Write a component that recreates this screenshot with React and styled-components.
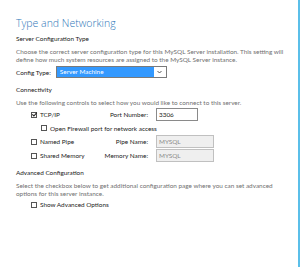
import React from 'react'
import styled, { createGlobalStyle } from 'styled-components'

const GlobalStyle = createGlobalStyle`
  html, body {
    margin: 0;
    padding: 0;
    background: #ffffff;
  }
  body {
    font-family: "Lato", "Noto Sans", sans-serif;
  }
`

const Page = styled.div`
  width: 300px;
  height: 267px;
  box-sizing: border-box;
  border-right: 2px solid #5bbfe9;
  padding: 16px 0 0 16px;
  overflow: hidden;
  color: #333;
  white-space: nowrap;
`

const Title = styled.h1`
  margin: 0 0 4px 0;
  font-family: "Open Sans", sans-serif;
  font-weight: 300;
  font-size: 10.5px;
  line-height: 14px;
  color: #2f78b9;
`

const Heading = styled.div`
  font-size: 6.4px;
  line-height: 9px;
  color: #1a1a1a;
  margin-bottom: 5px;
`

const Description = styled.p`
  margin: 0;
  font-size: 6.4px;
  line-height: 8px;
  color: #707070;
`

const Section = styled.div`
  margin-top: ${p => p.$top || 0}px;
`

const ConfigRow = styled.div`
  display: flex;
  align-items: center;
  margin-top: 2px;
  font-size: 6.4px;
  color: #222;
`

const Select = styled.div`
  margin-left: 5px;
  width: 111px;
  height: 12px;
  box-sizing: border-box;
  border: 1px solid #7a7a7a;
  display: flex;
  align-items: stretch;
`

const SelectValue = styled.div`
  flex: 1;
  background: #3399ff;
  color: #fff;
  padding-left: 3px;
  font-size: 6.4px;
  line-height: 10px;
`

const SelectArrow = styled.div`
  width: 12px;
  background: #fff;
  display: flex;
  align-items: center;
  justify-content: center;
`

const OptionGrid = styled.div`
  display: grid;
  grid-template-columns: 60px 57px auto;
  row-gap: 0.7px;
  margin-top: ${p => p.$top || 0}px;
  padding-left: 15px;
  align-items: center;
`

const Check = styled.label`
  display: flex;
  align-items: center;
  gap: 3px;
  height: 13px;
  font-size: 6.4px;
  color: #222;
  padding-left: ${p => p.$indent || 0}px;
  grid-column: ${p => (p.$wide ? '1 / 4' : 'auto')};
`

const Box = styled.span`
  flex-shrink: 0;
  width: 6px;
  height: 6px;
  box-sizing: border-box;
  border: 1px solid #555;
  background: #fff;
  display: inline-flex;
  align-items: center;
  justify-content: center;
`

const LabelCell = styled.div`
  display: flex;
  justify-content: flex-end;
  font-size: 6.4px;
  color: #222;
`

const Input = styled.div`
  margin-left: 8px;
  width: ${p => p.$w}px;
  height: 13px;
  box-sizing: border-box;
  border: 1px solid ${p => (p.$disabled ? '#c0c0c0' : '#8a8a8a')};
  background: ${p => (p.$disabled ? '#efefef' : '#fff')};
  color: ${p => (p.$disabled ? '#8a8a8a' : '#222')};
  font-size: 6.4px;
  line-height: 11px;
  padding-left: 2px;
`

const Tick = () => (
  <svg width="5" height="5" viewBox="0 0 5 5" style={{ overflow: 'visible' }}>
    <path d="M0.3 2.4 L1.9 4 L4.8 0.6" fill="none" stroke="#222" strokeWidth="1.1" />
  </svg>
)

const Chevron = () => (
  <svg width="5" height="4" viewBox="0 0 5 4">
    <path d="M0.5 1 L2.5 3 L4.5 1" fill="none" stroke="#444" strokeWidth="0.9" />
  </svg>
)

function CheckItem({ checked, children, ...rest }) {
  return (
    <Check {...rest}>
      <Box>{checked && <Tick />}</Box>
      {children}
    </Check>
  )
}

export default function App() {
  return (
    <>
      <GlobalStyle />
      <Page>
        <Title>Type and Networking</Title>
        <Heading>Server Configuration Type</Heading>
        <Description>
          Choose the correct server configuration type for this MySQL Server installation. This setting will
          <br />
          define how much system resources are assigned to the MySQL Server instance.
        </Description>
        <ConfigRow>
          Config Type:
          <Select>
            <SelectValue>Server Machine</SelectValue>
            <SelectArrow><Chevron /></SelectArrow>
          </Select>
        </ConfigRow>

        <Section $top={7}>
          <Heading>Connectivity</Heading>
          <Description>Use the following controls to select how you would like to connect to this server.</Description>
          <OptionGrid $top={1}>
            <CheckItem checked>TCP/IP</CheckItem>
            <LabelCell>Port Number:</LabelCell>
            <Input $w={42}>3306</Input>
            <CheckItem $wide $indent={10}>Open Firewall port for network access</CheckItem>
            <CheckItem>Named Pipe</CheckItem>
            <LabelCell>Pipe Name:</LabelCell>
            <Input $w={58} $disabled>MYSQL</Input>
            <CheckItem>Shared Memory</CheckItem>
            <LabelCell>Memory Name:</LabelCell>
            <Input $w={58} $disabled>MYSQL</Input>
          </OptionGrid>
        </Section>

        <Section $top={6}>
          <Heading>Advanced Configuration</Heading>
          <Description>
            Select the checkbox below to get additional configuration page where you can set advanced
            <br />
            options for this server instance.
          </Description>
          <OptionGrid>
            <CheckItem $wide>Show Advanced Options</CheckItem>
          </OptionGrid>
        </Section>
      </Page>
    </>
  )
}
